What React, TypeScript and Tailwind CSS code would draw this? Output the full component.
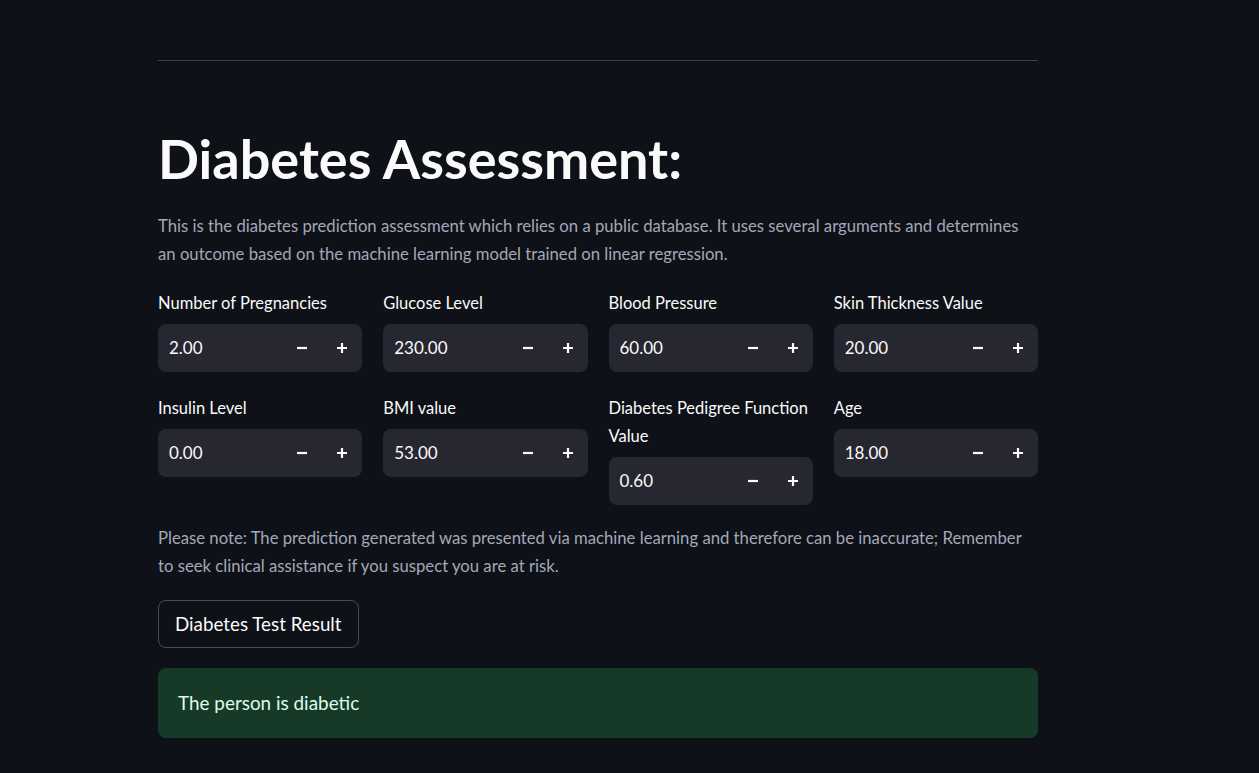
import React from 'react';

const fields = [
  { label: 'Number of Pregnancies', value: '2.00' },
  { label: 'Glucose Level', value: '230.00' },
  { label: 'Blood Pressure', value: '60.00' },
  { label: 'Skin Thickness Value', value: '20.00' },
  { label: 'Insulin Level', value: '0.00' },
  { label: 'BMI value', value: '53.00' },
  { label: 'Diabetes Pedigree Function Value', value: '0.60' },
  { label: 'Age', value: '18.00' },
];

const NumberInput = ({ label, value }: { label: string; value: string }) => (
  <div className="flex flex-col">
    <label className="text-[16.5px] leading-[28px] text-[#fafafa] mb-[7px]">{label}</label>
    <div className="flex items-center h-[48px] rounded-lg bg-[#262730]">
      <span className="flex-1 pl-[11px] text-[17px] text-[#fafafa]">{value}</span>
      <button className="w-[40px] h-full flex items-center justify-center text-[#fafafa]">
        <svg width="12" height="12" viewBox="0 0 12 12">
          <path d="M1 6h10" stroke="currentColor" strokeWidth="2.2" />
        </svg>
      </button>
      <button className="w-[40px] h-full flex items-center justify-center text-[#fafafa]">
        <svg width="12" height="12" viewBox="0 0 12 12">
          <path d="M1 6h10M6 1v10" stroke="currentColor" strokeWidth="2.2" />
        </svg>
      </button>
    </div>
  </div>
);

export default function App() {
  return (
    <div className="min-h-screen bg-[#0e1117] font-['Lato','Noto_Sans',sans-serif]">
      <div className="w-[880px] ml-[158px] pt-[60px]">
        <hr className="border-0 h-px bg-[#3d4048]" />

        <h1 className="mt-[66px] text-[54px] leading-[64px] font-bold text-[#fafafa]">
          Diabetes Assessment:
        </h1>

        <p className="mt-[21px] text-[16.7px] leading-[28px] text-[#a3a8b8]">
          This is the diabetes prediction assessment which relies on a public database. It uses several arguments and determines an outcome based on the machine learning model trained on linear regression.
        </p>

        <div className="mt-[21px] grid grid-cols-4 gap-x-[21px] gap-y-[22px] items-start">
          {fields.map((f) => (
            <NumberInput key={f.label} label={f.label} value={f.value} />
          ))}
        </div>

        <p className="mt-[19px] text-[16.7px] leading-[28px] text-[#a3a8b8]">
          Please note: The prediction generated was presented via machine learning and therefore can be inaccurate; Remember to seek clinical assistance if you suspect you are at risk.
        </p>

        <button className="mt-[20px] h-[48px] px-[16px] rounded-lg border border-[#4a4c55] text-[18.8px] text-[#fafafa]">
          Diabetes Test Result
        </button>

        <div className="mt-[20px] h-[70px] rounded-lg bg-[#173928] flex items-center px-[20px] text-[18.9px] text-[#dffde9]">
          The person is diabetic
        </div>
      </div>
    </div>
  );
}
